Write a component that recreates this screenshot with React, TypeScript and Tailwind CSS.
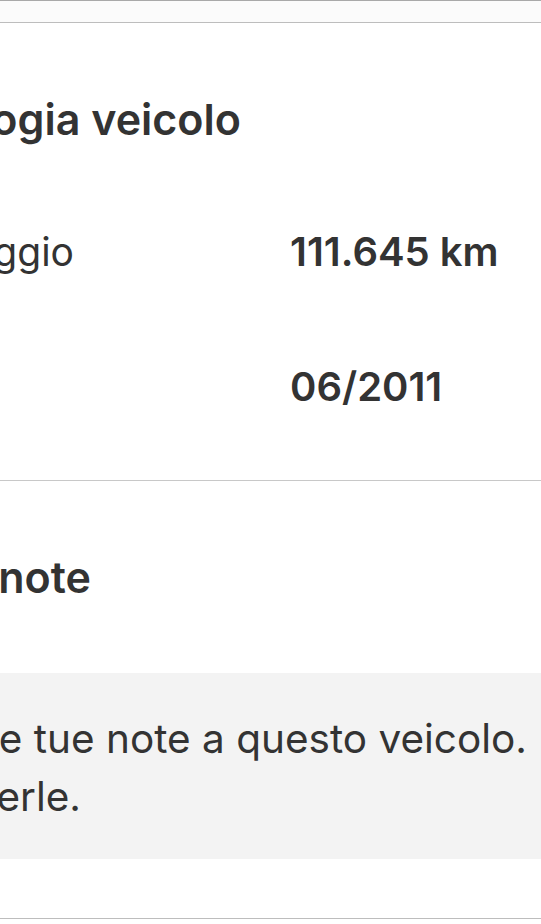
import React from 'react';

interface SpecRowProps {
  label: string;
  value: string;
  labelClass: string;
  valueClass: string;
  className?: string;
}

// the page is shown zoomed in and cut on the left, so left-hand texts are right-aligned to where they end
const SpecRow: React.FC<SpecRowProps> = ({ label, value, labelClass, valueClass, className = '' }) => (
  <div className={`flex items-center ${className}`}>
    <div className={`flex shrink-0 justify-end whitespace-nowrap text-[39px] leading-[48px] ${labelClass}`}>
      {label}
    </div>
    <div className={`whitespace-nowrap text-[40px] font-semibold leading-[48px] ${valueClass}`}>{value}</div>
  </div>
);

export default function App() {
  return (
    <div className="min-h-[924px] w-full overflow-hidden bg-white font-['Inter','Lato',sans-serif] text-[#333333]">
      <div className="h-[23px] border-t border-b border-t-[#a9a9a9] border-b-[#bdbdbd] bg-[#fbfbfb]" />

      <section className="h-[458px] border-b border-[#c8c8c8] pt-[70px]">
        <div className="flex w-[241px] justify-end whitespace-nowrap text-[43px] font-semibold leading-[52px]">
          Tipologia veicolo
        </div>
        <SpecRow
          className="mt-[83px]"
          label="Chilometraggio"
          value="111.645 km"
          labelClass="w-[74px]"
          valueClass="ml-[216px]"
        />
        <SpecRow
          className="mt-[87px]"
          label="Anno"
          value="06/2011"
          labelClass="w-0"
          valueClass="ml-[290px]"
        />
      </section>

      <section className="pt-[70px]">
        <div className="flex w-[91px] justify-end whitespace-nowrap text-[43px] font-semibold leading-[52px]">
          Le tue note
        </div>
        <div className="mt-[70px] h-[186px] bg-[#f3f3f3] pt-[37px] text-[40.5px] leading-[58px]">
          <div className="flex w-[527px] justify-end whitespace-nowrap">Aggiungi le tue note a questo veicolo.</div>
          <div className="flex w-[81px] justify-end whitespace-nowrap">Solo tu potrai vederle.</div>
        </div>
        <div className="h-[60px] border-b border-[#bdbdbd]" />
      </section>
    </div>
  );
}
